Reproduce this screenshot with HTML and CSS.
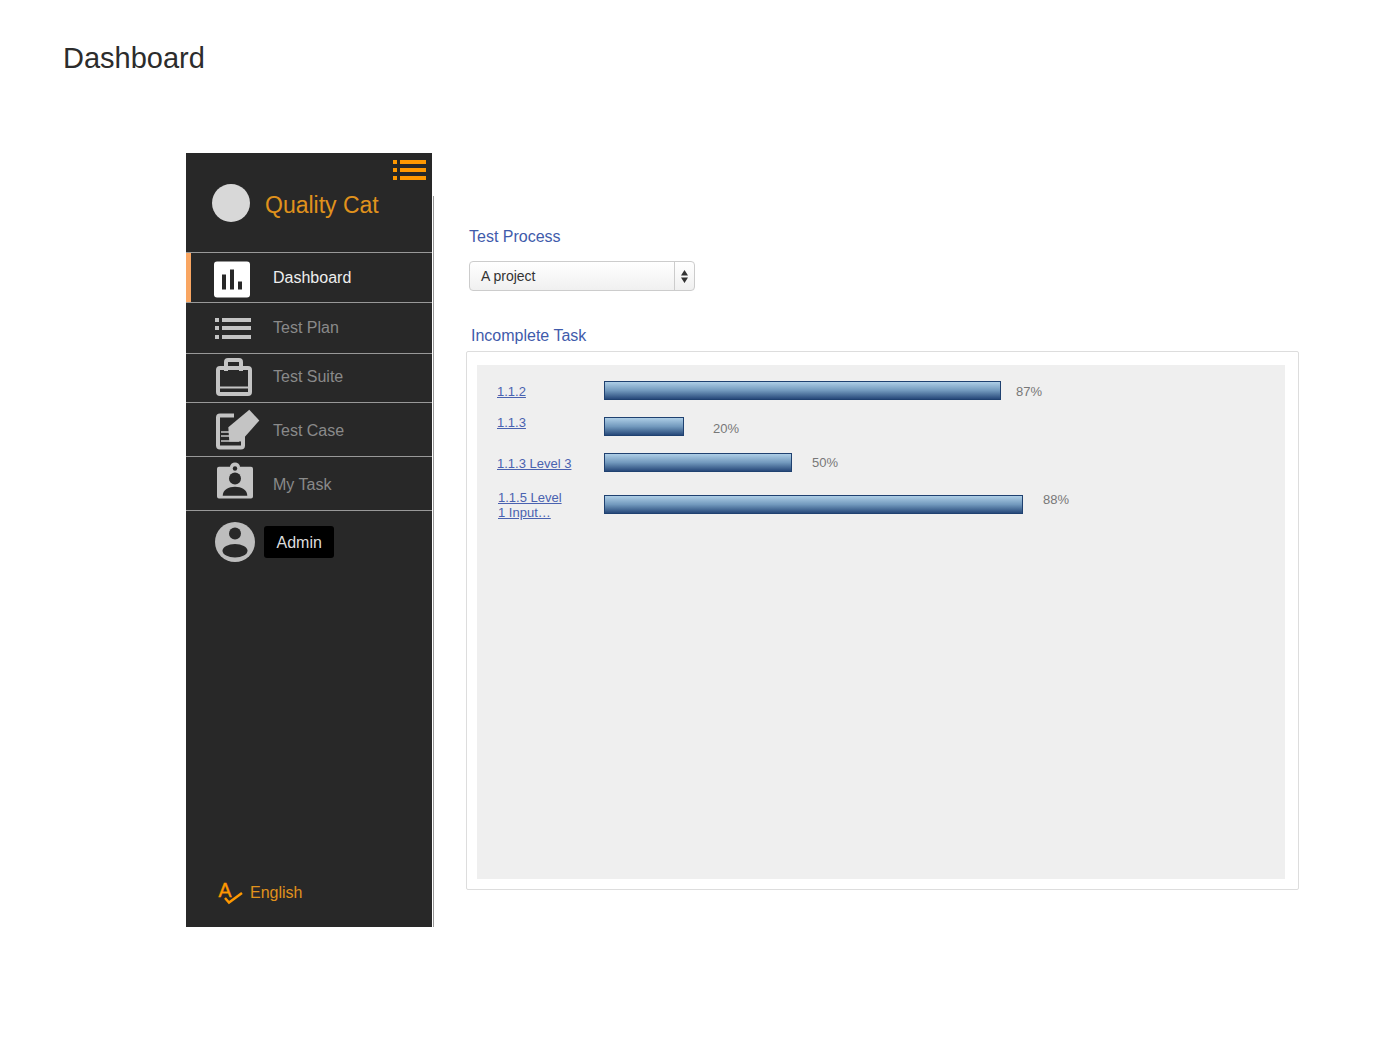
FILE: index.html
```html
<!DOCTYPE html>
<html lang="en">
<head>
    <meta charset="UTF-8">
    <meta name="viewport" content="width=device-width, initial-scale=1.0">
    <title>Dashboard</title>
    <link rel="stylesheet" href="styles.css">
</head>
<body>
    <header class="page-header">
        <h1>Dashboard</h1>
    </header>

    <div class="shell">
        <aside class="sidebar">
            <div class="side-top">
                <svg class="menu-toggle" width="33" height="20" viewBox="0 0 33 20">
                    <path fill="#ff9800" d="M0 0h4v4H0zM7 0h26v4H7zM0 8h4v4H0zM7 8h26v4H7zM0 16h4v4H0zM7 16h26v4H7z"/>
                </svg>
                <div class="brand">
                    <span class="brand-logo"></span>
                    <span class="brand-name">Quality Cat</span>
                </div>
            </div>

            <nav>
                <a class="nav-item nav-dashboard active">
                    <svg class="nav-icon" viewBox="0 0 46 46">
                        <rect x="0" y="6.500" width="36" height="36" rx="3" fill="#fff"/>
                        <path fill="#282828" d="M8 19.500h4v15H8zM16 14.500h4v20h-4zM24 26.500h4v8h-4z"/>
                    </svg>
                    <span class="nav-label">Dashboard</span>
                </a>
                <a class="nav-item nav-plan">
                    <svg class="nav-icon" viewBox="0 0 46 46">
                        <path fill="#c4c4c4" d="M1 13h4v4H1zM8 13h29v4H8zM1 21h4v4H1zM8 21h29v4H8zM1 30h4v4H1zM8 30h29v4H8z"/>
                    </svg>
                    <span class="nav-label">Test Plan</span>
                </a>
                <a class="nav-item nav-suite">
                    <svg class="nav-icon" viewBox="0 0 46 46">
                        <g fill="none" stroke="#c4c4c4" stroke-width="4">
                            <rect x="4" y="13" width="32" height="26" rx="2"/>
                            <path d="M12 16V7a2 2 0 0 1 2-2h11a2 2 0 0 1 2 2v9"/>
                            <path d="M4 32.500h32" stroke-width="2"/>
                        </g>
                    </svg>
                    <span class="nav-label">Test Suite</span>
                </a>
                <a class="nav-item nav-case">
                    <svg class="nav-icon" viewBox="0 0 46 46">
                        <rect x="4" y="8.500" width="25" height="32" rx="2" fill="none" stroke="#c4c4c4" stroke-width="4"/>
                        <path fill="#282828" d="M20 6h12v10H20z"/>
                        <path fill="#c4c4c4" d="M35.300 2.800l10 10.700-18.600 21H15.300l-1-14.300z"/>
                        <path stroke="#c4c4c4" stroke-width="1.500" d="M7 25h9M7 29h9M7 34h18"/>
                    </svg>
                    <span class="nav-label">Test Case</span>
                </a>
                <a class="nav-item nav-task">
                    <svg class="nav-icon" viewBox="0 0 46 46">
                        <path fill="#c4c4c4" d="M5 5.800h11a5 4.300 0 0 1 10 0h11a2 2 0 0 1 2 2v27.700a2 2 0 0 1-2 2H5a2 2 0 0 1-2-2V7.800a2 2 0 0 1 2-2z"/>
                        <circle cx="21" cy="7.500" r="2.200" fill="#282828"/>
                        <circle cx="21" cy="17.500" r="6" fill="#282828"/>
                        <path fill="#282828" d="M8.700 34.800c0-6 6-9 12.300-9s12.300 3 12.300 9z"/>
                    </svg>
                    <span class="nav-label">My Task</span>
                </a>
            </nav>

            <div class="user-row">
                <svg class="user-icon" width="40" height="40" viewBox="0 0 40 40">
                    <circle cx="20" cy="20" r="20" fill="#bdbdbd"/>
                    <circle cx="20" cy="11.500" r="6" fill="#282828"/>
                    <ellipse cx="20" cy="28.700" rx="12.500" ry="6.700" fill="#282828"/>
                </svg>
                <span class="user-badge">Admin</span>
            </div>

            <div class="lang-row">
                <svg class="lang-icon" width="25" height="26" viewBox="0 0 25 26">
                    <text x="0.500" y="18" class="lang-icon-text">A</text>
                    <path fill="none" stroke="#ff9800" stroke-width="2.500" d="M7 19l4 4.500 13-9.500"/>
                </svg>
                <span class="lang-name">English</span>
            </div>
        </aside>

        <div class="side-rule"></div>

        <main class="content">
            <h2 class="section-title process-title">Test Process</h2>
            <div class="project-select">
                <span class="project-value">A project</span>
                <span class="project-arrows">
                    <svg width="7" height="13" viewBox="0 0 7 13">
                        <path fill="#333" d="M3.500 0L7 5.500H0zM3.500 13L0 7.500h7z"/>
                    </svg>
                </span>
            </div>

            <h2 class="section-title task-title">Incomplete Task</h2>
            <div class="panel">
                <div class="chart">
                    <div class="chart-row row-a">
                        <div class="chart-label"><a href="#">1.1.2</a></div>
                        <div class="chart-bar" style="width: 397px"></div>
                        <div class="chart-value">87%</div>
                    </div>
                    <div class="chart-row row-b">
                        <div class="chart-label"><a href="#">1.1.3</a></div>
                        <div class="chart-bar" style="width: 80px"></div>
                        <div class="chart-value">20%</div>
                    </div>
                    <div class="chart-row row-c">
                        <div class="chart-label"><a href="#">1.1.3 Level 3</a></div>
                        <div class="chart-bar" style="width: 188px"></div>
                        <div class="chart-value">50%</div>
                    </div>
                    <div class="chart-row row-d">
                        <div class="chart-label"><a href="#">1.1.5 Level<br>1 Input…</a></div>
                        <div class="chart-bar" style="width: 419px"></div>
                        <div class="chart-value">88%</div>
                    </div>
                </div>
            </div>
        </main>
    </div>
</body>
</html>
```

FILE: styles.css
```css
* {
    box-sizing: border-box;
}
body {
    margin: 0;
    background-color: #fff;
    font-family: "Liberation Sans", Arial, sans-serif;
}
.page-header {
    height: 153px;
    padding: 41px 0 0 63px;
}
h1 {
    margin: 0;
    font-size: 29px;
    font-weight: normal;
    line-height: 34px;
    color: #2c2c2c;
}
.shell {
    display: flex;
    padding-left: 186px;
}

/* sidebar */
.sidebar {
    display: flex;
    flex-direction: column;
    width: 246px;
    height: 774px;
    background-color: #282828;
}
.side-rule {
    width: 1px;
    margin: 43px 0 0 1px;
    background-color: #999;
}
.side-top {
    display: flex;
    flex-direction: column;
    height: 100px;
    padding-top: 7px;
    border-bottom: 1px solid #999;
}
.menu-toggle {
    align-self: flex-end;
    margin-right: 6px;
}
.brand {
    display: flex;
    align-items: center;
    margin-top: 4px;
    padding-left: 26px;
}
.brand-logo {
    width: 38px;
    height: 38px;
    border-radius: 50%;
    background-color: #d8d8d8;
}
.brand-name {
    margin-left: 15px;
    padding-top: 4px;
    font-size: 23px;
    color: #e0921c;
}
.nav-item {
    display: flex;
    align-items: center;
    padding-left: 28px;
    border-bottom: 1px solid #999;
    font-size: 16px;
    color: #8a8a8a;
}
.nav-icon {
    flex: none;
    width: 46px;
    height: 46px;
    margin-right: 13px;
}
.nav-label {
    line-height: 20px;
}
.nav-dashboard {
    height: 50px;
    color: #eee;
    box-shadow: inset 5px 0 0 #f9a662;
}
.nav-plan {
    height: 51px;
}
.nav-suite {
    height: 49px;
}
.nav-suite .nav-label {
    margin-bottom: 2px;
}
.nav-case,
.nav-task {
    height: 54px;
}
.nav-case .nav-label,
.nav-task .nav-label {
    margin-top: 2px;
}
.user-row {
    display: flex;
    align-items: center;
    padding: 11px 0 0 29px;
}
.user-badge {
    margin-left: 9px;
    padding: 2px 12.500px 0;
    border-radius: 3px;
    background-color: #000;
    font-size: 16px;
    line-height: 30px;
    color: #ddd;
}
.lang-row {
    display: flex;
    align-items: center;
    margin-top: auto;
    padding: 0 0 22px 32px;
    font-size: 16px;
    line-height: 20px;
    color: #e0921c;
}
.lang-icon {
    margin-right: 7px;
}
.lang-icon-text {
    font-size: 19.500px;
    fill: #ff9800;
    stroke: #ff9800;
    stroke-width: 0.400px;
}
.lang-name {
    margin-top: 2px;
}

/* main area */
.content {
    padding: 74px 0 0 32px;
}
.section-title {
    margin: 0;
    font-size: 16px;
    font-weight: normal;
    line-height: 20px;
    color: #3f5bab;
}
.process-title {
    padding-left: 3px;
}
.task-title {
    margin: 35px 0 5px;
    padding-left: 5px;
}
.project-select {
    display: flex;
    width: 226px;
    height: 30px;
    margin: 14px 0 0 3px;
    border: 1px solid #ccc;
    border-radius: 4px;
    background: linear-gradient(#fff, #f0f0f0);
    font-size: 14px;
    line-height: 28px;
    color: #333;
}
.project-value {
    flex: 1;
    padding-left: 11px;
}
.project-arrows {
    display: flex;
    align-items: center;
    justify-content: center;
    width: 20px;
    border-left: 1px solid #ccc;
}
.panel {
    width: 833px;
    height: 539px;
    padding: 13px 13px 10px 10px;
    border: 1px solid #ddd;
    border-radius: 2px;
    background-color: #fff;
}
.chart {
    height: 100%;
    padding: 16px 0 0 20px;
    background-color: #efefef;
}
.chart-row {
    display: flex;
    align-items: flex-start;
    height: 36px;
    font-size: 13px;
    line-height: 15px;
}
.chart-label {
    flex: none;
    width: 107px;
    margin-top: var(--label-top);
    padding-left: var(--label-left, 0);
}
.chart-label a {
    color: #4a62b0;
}
.chart-bar {
    flex: none;
    height: 19px;
    border: 1px solid #1f4170;
    background: linear-gradient(#aecee6, #7299bd 50%, #27497a);
}
.chart-value {
    margin: var(--value-top) 0 0 var(--value-left);
    color: #777;
}
.row-a {
    --label-top: 3px;
    --value-top: 3px;
    --value-left: 15px;
}
.row-b {
    --label-top: -2px;
    --value-top: 4px;
    --value-left: 29px;
}
.row-c {
    height: 42px;
    --label-top: 3px;
    --value-top: 2px;
    --value-left: 20px;
}
.row-d {
    --label-top: -5px;
    --label-left: 1px;
    --value-top: -3px;
    --value-left: 20px;
}
```
